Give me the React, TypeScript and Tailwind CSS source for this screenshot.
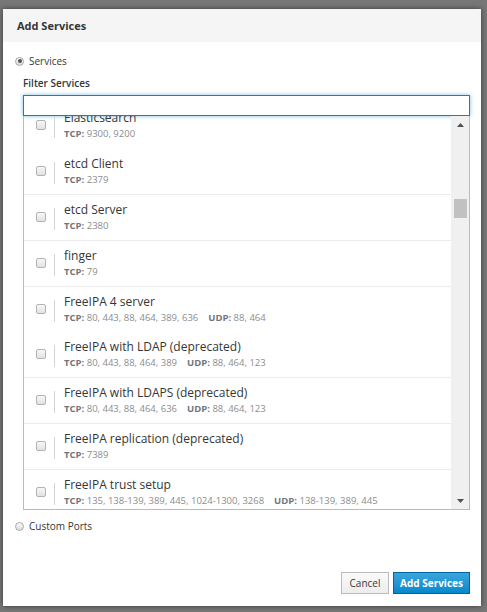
import React, { FC } from 'react';

type Service = {
    name: string;
    tcp?: string;
    udp?: string;
    border: boolean;
    h: string;
};

const services: Service[] = [
    { name: 'Elasticsearch', tcp: '9300, 9200', border: false, h: 'h-[46px]' },
    { name: 'etcd Client', tcp: '2379', border: true, h: 'h-[46px]' },
    { name: 'etcd Server', tcp: '2380', border: true, h: 'h-[46px]' },
    { name: 'finger', tcp: '79', border: true, h: 'h-[46px]' },
    { name: 'FreeIPA 4 server', tcp: '80, 443, 88, 464, 389, 636', udp: '88, 464', border: false, h: 'h-[45px]' },
    { name: 'FreeIPA with LDAP (deprecated)', tcp: '80, 443, 88, 464, 389', udp: '88, 464, 123', border: true, h: 'h-[46px]' },
    { name: 'FreeIPA with LDAPS (deprecated)', tcp: '80, 443, 88, 464, 636', udp: '88, 464, 123', border: true, h: 'h-[46px]' },
    { name: 'FreeIPA replication (deprecated)', tcp: '7389', border: true, h: 'h-[46px]' },
    { name: 'FreeIPA trust setup', tcp: '135, 138-139, 389, 445, 1024-1300, 3268', udp: '138-139, 389, 445', border: false, h: 'h-[46px]' },
];

const Radio: FC<{ checked?: boolean; label: string }> = ({ checked, label }) => (
    <div className="flex items-center h-[14px]">
        <span className="w-[9px] h-[9px] rounded-full border border-[#a9a9a9] bg-gradient-to-b from-[#fafafa] to-[#dcdcdc] flex items-center justify-center">
            {checked && <span className="w-[4px] h-[4px] rounded-full bg-[#555]"></span>}
        </span>
        <span className="ml-[5px] text-[10px] text-[#363636]">{label}</span>
    </div>
);

const ServiceRow: FC<{ s: Service }> = ({ s }) => (
    <div className={`${s.h} shrink-0 flex items-start ${s.border ? 'border-b border-[#ececec]' : ''}`}>
        <div className="w-[22px] shrink-0 flex justify-end pt-[17px]">
            <span className="w-[10px] h-[10px] rounded-[2px] border border-[#b3b3b3] bg-gradient-to-b from-[#f7f7f7] to-[#e2e2e2]"></span>
        </div>
        <div className="ml-[8px] mt-[13px] w-px h-[22px] bg-[#d4d4d4] shrink-0"></div>
        <div className="ml-[9px] pt-[7px] whitespace-nowrap">
            <div className="text-[12px] leading-[16px] text-[#363636]">{s.name}</div>
            <div className="text-[9.5px] leading-[14px] mt-[1px] text-[#8b8d8f]">
                <span className="font-bold text-[#72767b]">TCP:</span> {s.tcp}
                {s.udp && (
                    <span className="ml-[10px]"><span className="font-bold text-[#72767b]">UDP:</span> {s.udp}</span>
                )}
            </div>
        </div>
    </div>
);

const App: FC = () => {
    return (
        <div className="w-[487px] h-[612px] bg-[#777777] overflow-hidden font-['Open_Sans',sans-serif] pl-[3px] pt-[9px]">
            <div className="w-[478px] h-[597px] bg-white flex flex-col shadow-[0_0_5px_rgba(0,0,0,0.55)]">
                <header className="h-[33px] bg-[#f5f5f5] flex items-center px-[14px] shrink-0">
                    <h1 className="text-[11px] font-bold text-[#363636] mt-[1px]">Add Services</h1>
                </header>

                <main className="flex-1 pt-[12px] pl-[12px]">
                    <Radio checked label="Services" />
                    <div className="pl-[8px]">
                        <label className="block mt-[8px] h-[14px] leading-[14px] text-[10px] font-semibold text-[#363636]">Filter Services</label>
                        <input type="text" className="block mt-[5px] w-[447px] h-[21px] border border-[#0088ce] outline-none shadow-[0_0_4px_rgba(0,136,206,0.55)] bg-white" />
                        <div className="w-[447px] h-[394px] border-l border-r border-b border-[#bbbbbb] flex">
                            <div className="flex-1 overflow-hidden">
                                <div className="-mt-[13px] flex flex-col">
                                    {services.map(s => <ServiceRow key={s.name} s={s} />)}
                                </div>
                            </div>
                            <div className="w-[18px] bg-[#f0f0f0] flex flex-col shrink-0">
                                <div className="h-[17px] flex items-center justify-center">
                                    <svg width="7" height="4" viewBox="0 0 7 4"><polygon points="3.5,0 7,4 0,4" fill="#505050" /></svg>
                                </div>
                                <div className="flex-1">
                                    <div className="mt-[66px] ml-[3px] w-[13px] h-[19px] bg-[#c1c1c1]"></div>
                                </div>
                                <div className="h-[17px] flex items-center justify-center">
                                    <svg width="7" height="4" viewBox="0 0 7 4"><polygon points="0,0 7,0 3.5,4" fill="#505050" /></svg>
                                </div>
                            </div>
                        </div>
                    </div>
                    <div className="mt-[9px]">
                        <Radio label="Custom Ports" />
                    </div>
                </main>

                <footer className="flex justify-end gap-[4px] pr-[11px] pb-[12px] shrink-0">
                    <button className="w-[48px] h-[22px] border border-[#bbbbbb] bg-gradient-to-b from-[#fafafa] to-[#ededed] text-[10px] text-[#363636]">Cancel</button>
                    <button className="w-[77px] h-[22px] border border-[#00659c] bg-gradient-to-b from-[#39a5dc] to-[#0088ce] text-[10px] font-bold text-white">Add Services</button>
                </footer>
            </div>
        </div>
    );
};

export default App;
